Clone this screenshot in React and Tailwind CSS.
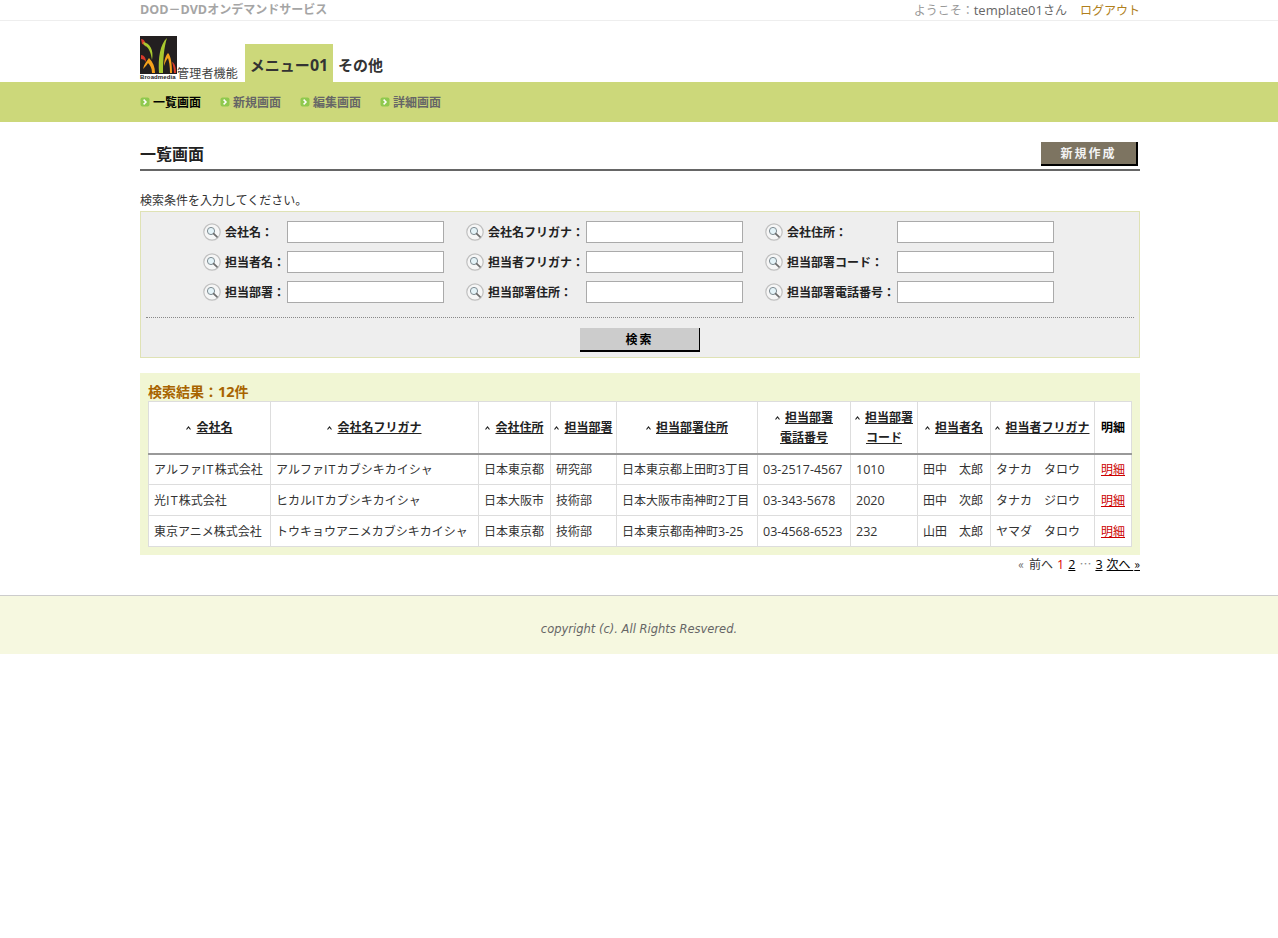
function T({ children, size = 12.5 }) {
  return String(children).split(/([A-Za-z0-9\-]+)/).map((p, i) =>
    /^[A-Za-z0-9\-]+$/.test(p)
      ? <span key={i} className="font-['Open_Sans',sans-serif]" style={{ fontSize: size, letterSpacing: p === "IT" ? "1.2px" : undefined }}>{p}</span>
      : <span key={i}>{p}</span>
  );
}
function Glass() {
  return (
    <svg width="18" height="18" viewBox="0 0 18 18" className="shrink-0">
      <circle cx="9" cy="9" r="8.2" fill="#f6f6f6" stroke="#c0c0c0" strokeWidth="1.2" />
      <circle cx="8" cy="8" r="3.6" fill="#e4f3f8" stroke="#7f8c92" strokeWidth="1" />
      <path d="M10.6 10.6 L14 13.8" stroke="#6d6d6d" strokeWidth="1.7" strokeLinecap="round" />
    </svg>
  );
}
function Bullet() {
  return (
    <svg width="10" height="10" viewBox="0 0 10 10" className="shrink-0">
      <rect x="0.5" y="0.5" width="9" height="9" rx="2" fill="#8fc94f" />
      <path d="M3.6 2.6 L6 5 L3.6 7.4" fill="none" stroke="#fff" strokeWidth="1.5" />
    </svg>
  );
}
function Logo() {
  return (
    <div className="w-[37px] h-[44px] flex flex-col shrink-0">
      <svg width="37" height="38" viewBox="0 0 37 38" className="block">
        <rect width="37" height="38" fill="#231f20" />
        <path d="M1 3 C4 3 6 6 6 11 C5 9 3 8 2 8Z" fill="#d8392b" />
        <path d="M1 19 C4 19 6 22 6 26 C5 24 3 23 1 23Z" fill="#d8392b" />
        <path d="M3 6 C10 7 14 14 12 24 C11 17 9 11 4 9Z" fill="#a9c92f" />
        <path d="M3 33 C4 28 7 25 9 22 C13 26 15 31 15 37 L12 37 C12 32 10 29 8 27 C7 29 5 31 3 33Z" fill="#f5a21b" />
        <path d="M19 37 C18 22 20 8 27 2 C24 11 23 24 23 37Z" fill="#a9c92f" />
        <path d="M24 30 C24 24 26 19 28 17 C31 20 32 28 32 37 L30 37 C30 30 29 25 28 22 C26 24 25 27 24 30Z" fill="#f5a21b" />
        <path d="M32 26 C35 27 36 32 36 37 L34 37 C34 33 33 29 32 26Z" fill="#d8392b" />
      </svg>
      <div className="h-[6px] bg-white text-[6px] leading-[6px] font-bold text-[#222] whitespace-nowrap tracking-[0.1px] font-['Liberation_Sans',sans-serif]">Broadmedia</div>
    </div>
  );
}
function Field({ label, w }) {
  return (
    <div className="flex items-center h-[22px]">
      <Glass />
      <span className="font-bold text-[#222] ml-1 pb-[1px] whitespace-nowrap" style={{ width: w }}>{label}</span>
      <input className="w-[157px] h-[22px] bg-white border border-[#aaaaaa]" />
    </div>
  );
}
const rows = [
  ["アルファIT株式会社", "アルファITカブシキカイシャ", "日本東京都", "研究部", "日本東京都上田町3丁目", "03-2517-4567", "1010", "田中　太郎", "タナカ　タロウ"],
  ["光IT株式会社", "ヒカルITカブシキカイシャ", "日本大阪市", "技術部", "日本大阪市南神町2丁目", "03-343-5678", "2020", "田中　次郎", "タナカ　ジロウ"],
  ["東京アニメ株式会社", "トウキョウアニメカブシキカイシャ", "日本東京都", "技術部", "日本東京都南神町3-25", "03-4568-6523", "232", "山田　太郎", "ヤマダ　タロウ"],
];
const widths = [122, 208, 72, 66, 141, 93, 67, 73, 104, 37];
function Sort() {
  return (
    <svg width="5" height="4" viewBox="0 0 5 4" className="inline-block mr-[5px] mb-[2px]">
      <path d="M0.5 3.5 L2.5 1 L4.5 3.5" fill="none" stroke="#222" strokeWidth="1.2" />
    </svg>
  );
}
const heads = [["会社名"], ["会社名フリガナ"], ["会社住所"], ["担当部署"], ["担当部署住所"], ["担当部署", "電話番号"], ["担当部署", "コード"], ["担当者名"], ["担当者フリガナ"]];
export default function App() {
  return (
    <div className="min-h-[938px] bg-white text-[12px] leading-[18px] text-[#333] font-['Noto_Sans_CJK_JP','Noto_Sans',sans-serif]">
      <div className="h-[21px] border-b border-[#eeeeee]">
        <div className="w-[1000px] ml-[140px] flex justify-between items-center h-[20px] pb-[1px]">
          <span className="font-bold text-[#a5a5a5]"><T>DOD</T>－<T>DVD</T>オンデマンドサービス</span>
          <span className="text-[#999]">ようこそ：<span className="text-[#666]"><T size={13}>template01</T>さん</span><span className="ml-[13px] text-[#b07f1c]">ログアウト</span></span>
        </div>
      </div>
      <div className="h-[61px]">
        <div className="w-[1000px] ml-[140px] h-full flex items-end">
          <div className="flex items-end mb-[2px]">
            <Logo />
            <span className="text-[12px] leading-[14px] tracking-[0.2px] text-[#444]">管理者機能</span>
          </div>
          <div className="ml-[7px] w-[88px] h-[38px] bg-[#ccd87a] flex items-center justify-center pt-[6px] pb-[2px] text-[15px] font-bold text-[#333] whitespace-nowrap"><span>メニュー<T size={16}>01</T></span></div>
          <div className="ml-[5px] h-[38px] flex items-center pt-[6px] pb-[2px] text-[15px] font-bold text-[#333]">その他</div>
        </div>
      </div>
      <div className="h-[40px] bg-[#ccd87a]">
        <div className="w-[1000px] ml-[140px] h-full flex items-center pb-[1px] font-bold text-[#666]">
          {["一覧画面", "新規画面", "編集画面", "詳細画面"].map((t, i) => (
            <div key={t} className="w-[80px] flex items-center gap-[3px]">
              <Bullet />
              <span className={i === 0 ? "text-black" : ""}>{t}</span>
            </div>
          ))}
        </div>
      </div>
      <div className="w-[1000px] ml-[140px]">
        <div className="mt-[20px] h-[29px] border-b-2 border-[#666] flex justify-between">
          <h1 className="text-[16px] leading-[22px] font-bold text-[#222]">一覧画面</h1>
          <div className="mr-[2px] w-[97px] h-[24px] bg-[#7d7461] border-r-2 border-b-2 border-black flex items-center justify-center text-[#f2f2f2] font-bold tracking-[2px]">新規作成</div>
        </div>
        <p className="mt-[21px] h-[19px] leading-[16px]">検索条件を入力してください。</p>
        <div className="h-[147px] bg-[#eeeeee] border border-[#dfe2b5] px-[5px] pt-[9px]">
          <div className="pl-[57px] flex">
            <div className="w-[263px] flex flex-col gap-[8px]">
              <Field label="会社名：" w={62} />
              <Field label="担当者名：" w={62} />
              <Field label="担当部署：" w={62} />
            </div>
            <div className="w-[299px] flex flex-col gap-[8px]">
              <Field label="会社名フリガナ：" w={98} />
              <Field label="担当者フリガナ：" w={98} />
              <Field label="担当部署住所：" w={98} />
            </div>
            <div className="flex flex-col gap-[8px]">
              <Field label="会社住所：" w={110} />
              <Field label="担当部署コード：" w={110} />
              <Field label="担当部署電話番号：" w={110} />
            </div>
          </div>
          <div className="mt-[14px] border-t border-dotted border-[#888]" />
          <div className="mt-[10px] flex justify-center">
            <div className="w-[120px] h-[24px] bg-[#cccccc] border-r border-b-2 border-black flex items-center justify-center font-bold text-black tracking-[2px]">検索</div>
          </div>
        </div>
        <div className="mt-[15px] h-[182px] bg-[#f1f6d4] px-[8px] pt-[8px]">
          <div className="h-[20px] text-[14px] leading-[20px] font-bold text-[#a86400]">検索結果：<T size={14.5}>12</T>件</div>
          <table className="table-fixed border-collapse w-[983px] bg-white text-[#333]">
            <colgroup>
              {widths.map((w, i) => <col key={i} style={{ width: w }} />)}
            </colgroup>
            <thead>
              <tr className="h-[52px]">
                {heads.map((h) => (
                  <th key={h.join()} className="border border-[#dddddd] border-b-2 border-b-[#999999] p-0 font-bold text-[#222] text-center align-middle leading-[20px] whitespace-nowrap">
                    <Sort /><u>{h[0]}</u>{h[1] && <><br /><u>{h[1]}</u></>}
                  </th>
                ))}
                <th className="border border-[#dddddd] border-b-2 border-b-[#999999] p-0 font-bold text-black text-center">明細</th>
              </tr>
            </thead>
            <tbody>
              {rows.map((r) => (
                <tr key={r[0]} className="h-[31px]">
                  {r.map((c, i) => (
                    <td key={i} className="border border-[#dddddd] px-[5px] py-0 whitespace-nowrap"><T>{c}</T></td>
                  ))}
                  <td className="border border-[#dddddd] p-0 text-center"><u className="text-[#cc0000]">明細</u></td>
                </tr>
              ))}
            </tbody>
          </table>
        </div>
        <div className="h-[40px] flex justify-end gap-[4px] text-[#333] whitespace-nowrap">
          <span className="text-[#666] mr-[1px]">«</span>
          <span>前へ</span>
          <span className="text-[#dd0000] font-medium"><T>1</T></span>
          <u className="text-black"><T>2</T></u>
          <span className="w-[12px] text-center text-[#888]">…</span>
          <u className="text-black"><T>3</T></u>
          <u className="text-black">次へ&nbsp;<span className="ml-[1px]">»</span></u>
        </div>
      </div>
      <div className="h-[59px] bg-[#f6f8e0] border-t border-[#cccccc] flex items-center justify-center pt-[8px] italic text-[#666] text-[11.5px] font-['DejaVu_Sans',sans-serif]">
        copyright (c). All Rights Resvered.
      </div>
    </div>
  );
}
